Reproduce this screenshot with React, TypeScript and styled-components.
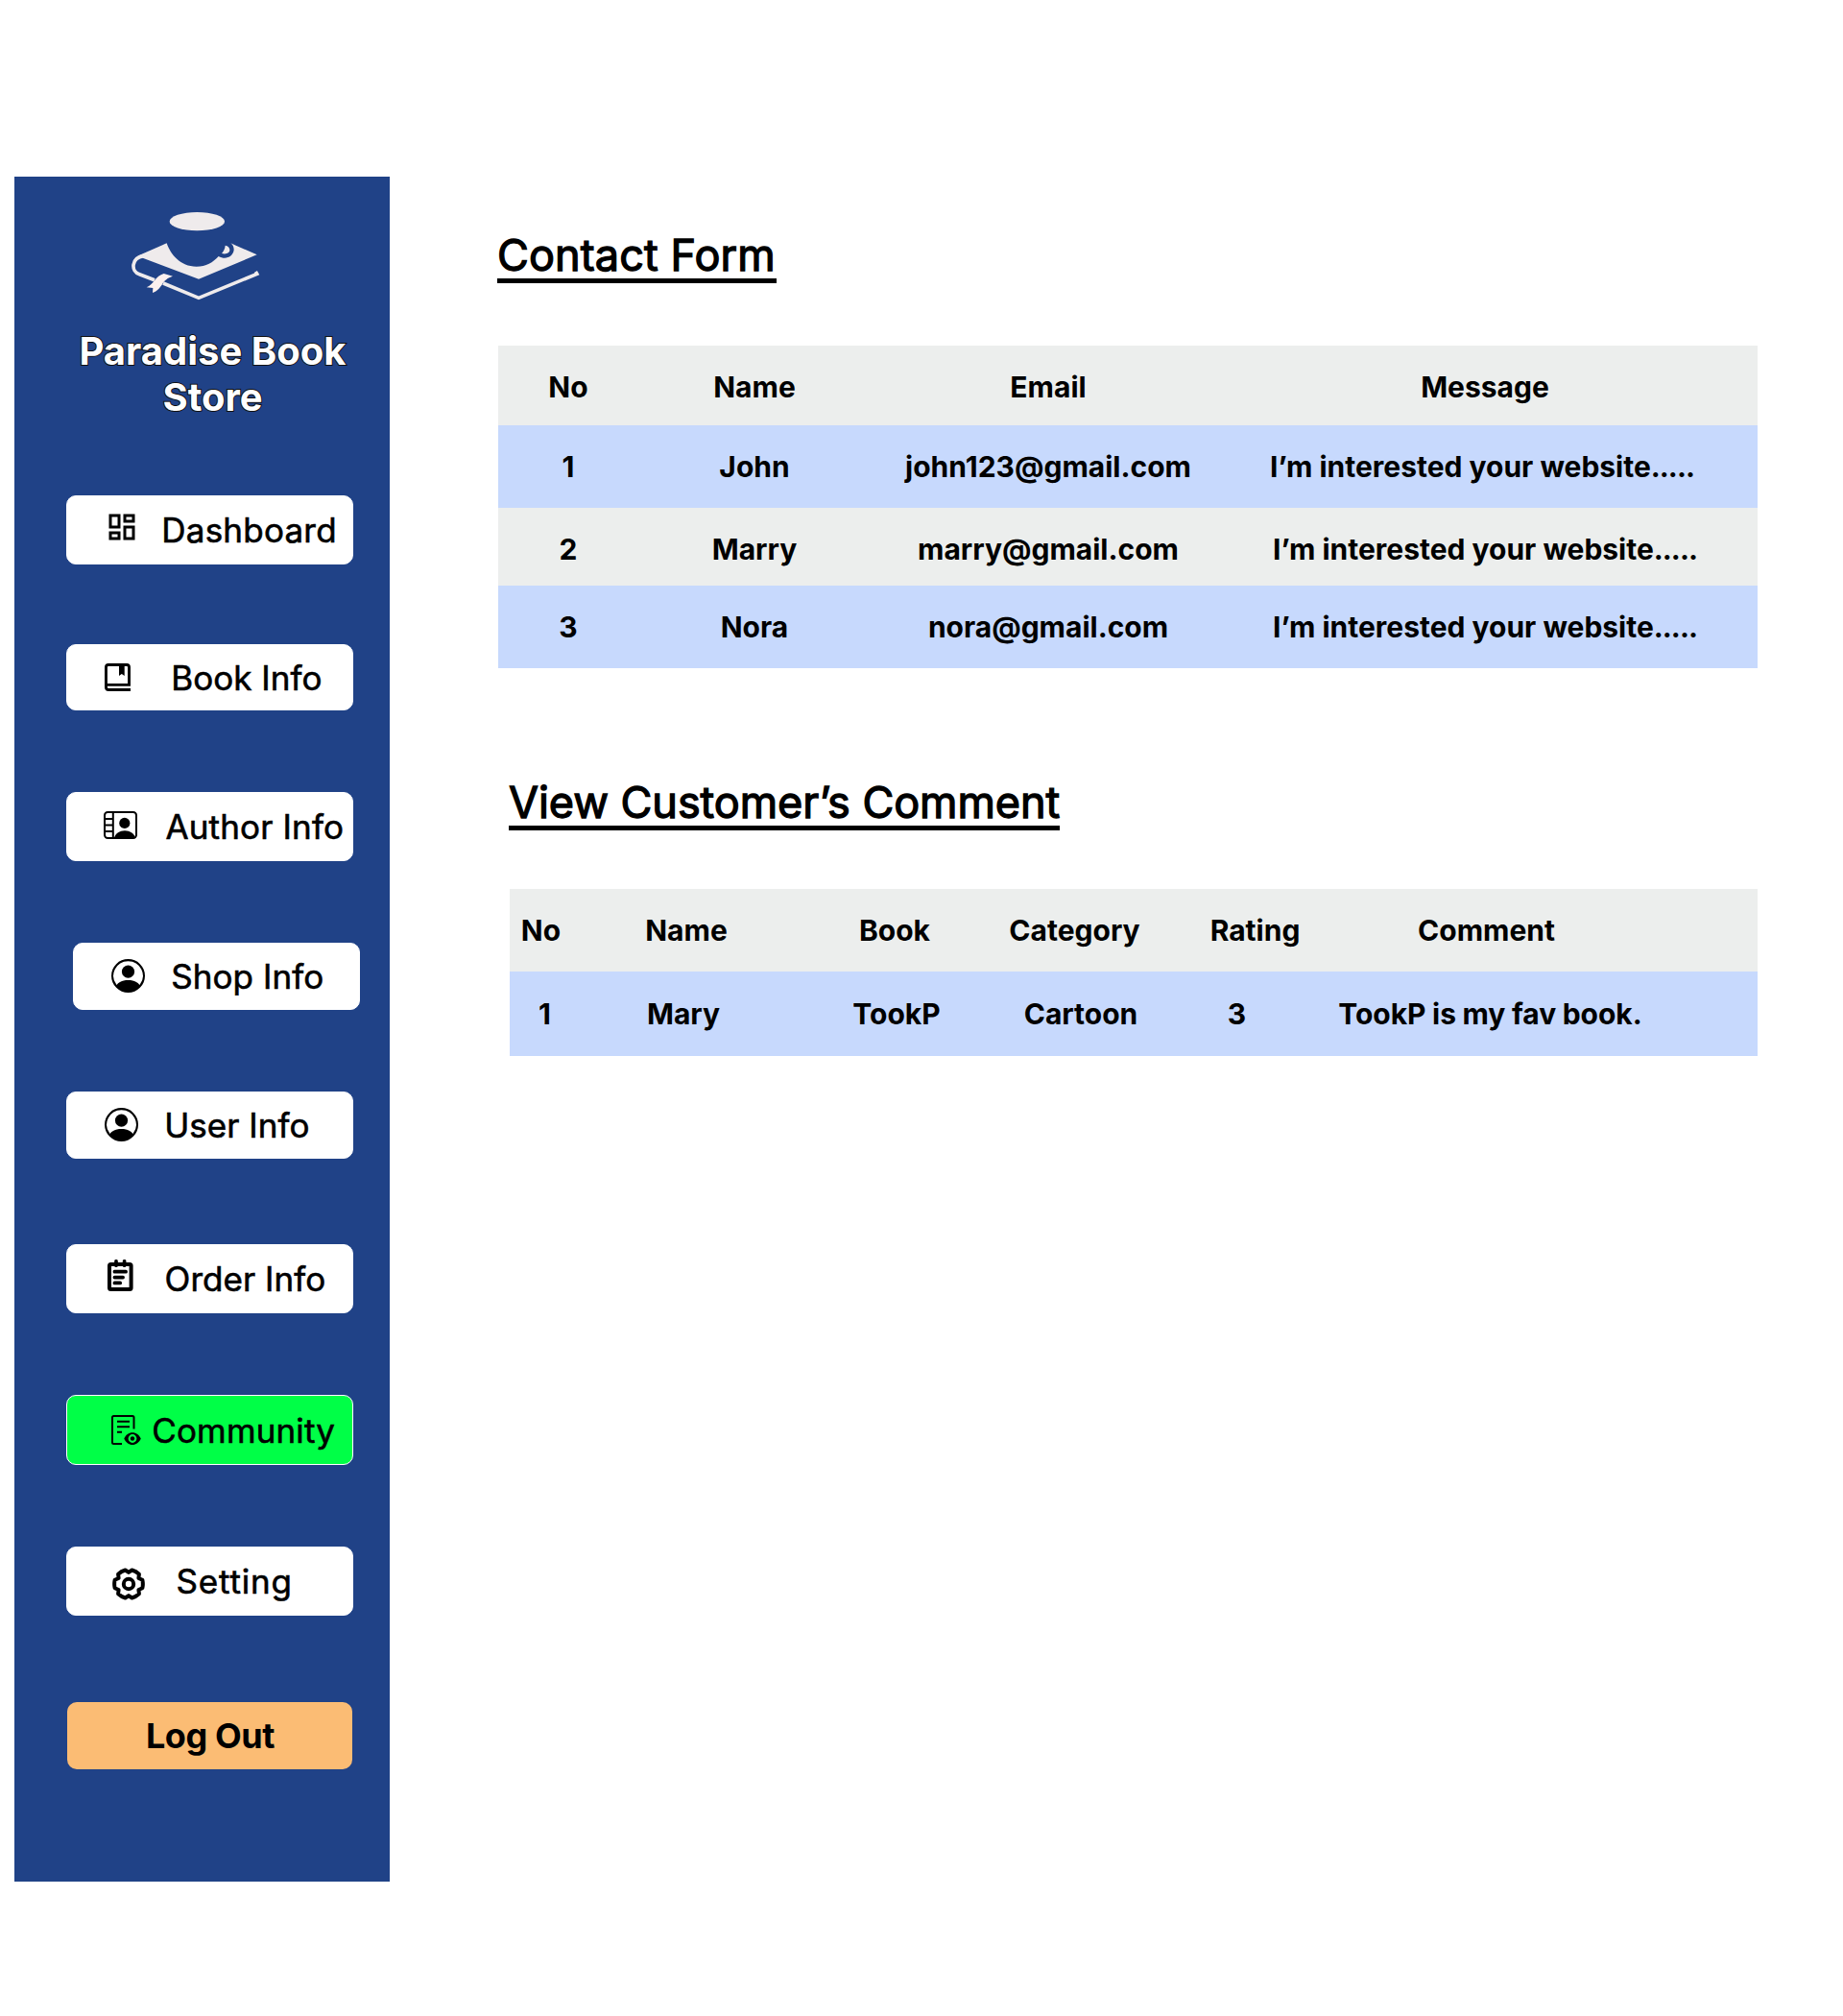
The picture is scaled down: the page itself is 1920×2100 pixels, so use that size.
import React from "react";
import styled, { createGlobalStyle } from "styled-components";
import { MdOutlineDashboard } from "react-icons/md";
import { BsPersonCircle } from "react-icons/bs";

const GlobalStyle = createGlobalStyle`
  *, *::before, *::after { box-sizing: border-box; }
  body { margin: 0; background: #fff; color: #000; font-family: Inter, "Liberation Sans", sans-serif; }
`;

const Page = styled.div`
  display: flex;
  align-items: flex-start;
  width: 1920px;
  height: 2100px;
  padding: 184px 89px 0 15px;
`;

const Sidebar = styled.aside`
  display: flex;
  flex-direction: column;
  flex: none;
  width: 391px;
  height: 1776px;
  padding: 33px 0 0 54px;
  background: #204287;
`;

const LogoSvg = styled.svg`
  display: block;
  flex: none;
  width: 140px;
  height: 100px;
  margin-left: 64px;
`;

const Brand = styled.h1`
  width: 305px;
  margin: 25px 0 78px;
  font-size: 40px;
  font-weight: 700;
  line-height: 48px;
  text-align: center;
  color: #fff;
  -webkit-text-stroke: 2px #111;
  paint-order: stroke fill;
`;

const Nav = styled.nav`
  display: flex;
  flex-direction: column;
`;

const NavButton = styled.a<{ $height: number; $after: number; $shift?: number; $start: number; $active?: boolean }>`
  display: flex;
  align-items: center;
  width: 299px;
  height: ${(p) => p.$height}px;
  margin: 0 0 ${(p) => p.$after}px ${(p) => p.$shift ?? 0}px;
  padding-left: ${(p) => p.$start - 1}px;
  border: 1px solid #fff;
  border-radius: 10px;
  background: ${(p) => (p.$active ? "#00ff47" : "#fff")};
  color: #000;
`;

const IconSlot = styled.span<{ $top: number; $gap: number }>`
  display: flex;
  flex: none;
  align-self: flex-start;
  margin: ${(p) => p.$top - 1}px ${(p) => p.$gap}px 0 0;
`;

const NavLabel = styled.span<{ $spacing: number }>`
  font-size: 35px;
  line-height: 44px;
  letter-spacing: ${(p) => p.$spacing}px;
  white-space: nowrap;
  -webkit-text-stroke: 0.6px #000;
`;

const LogOut = styled.button`
  width: 297px;
  height: 70px;
  margin-left: 1px;
  padding: 0 0 0 1px;
  border: 0;
  border-radius: 10px;
  background: #fbbc74;
  color: #000;
  font: 700 36px/44px Inter, "Liberation Sans", sans-serif;
  letter-spacing: -0.4px;
`;

const Main = styled.main`
  display: flex;
  flex-direction: column;
  padding: 57px 0 0 112px;
`;

const Section = styled.section<{ $indent: number; $after: number }>`
  display: flex;
  flex-direction: column;
  align-items: flex-start;
  margin: 0 0 ${(p) => p.$after}px ${(p) => p.$indent}px;
`;

const Heading = styled.h2<{ $after: number; $width: number; $spacing: number }>`
  width: ${(p) => p.$width}px;
  height: 54px;
  margin: 0 0 ${(p) => p.$after}px;
  border-bottom: 5px solid #000;
  font-size: 45px;
  font-weight: 400;
  line-height: 49px;
  letter-spacing: ${(p) => p.$spacing}px;
  white-space: nowrap;
  -webkit-text-stroke: 1.3px #000;
`;

const Table = styled.div`
  display: flex;
  flex-direction: column;
  margin-left: 1px;
`;

const Row = styled.div<{ $width: number; $height: number; $columns: string; $tinted?: boolean; $top?: number }>`
  display: grid;
  grid-template-columns: ${(p) => p.$columns};
  width: ${(p) => p.$width}px;
  height: ${(p) => p.$height}px;
  padding-top: ${(p) => p.$top ?? 25}px;
  background: ${(p) => (p.$tinted ? "#c7d9fd" : "#eceeed")};
  font-size: 30px;
  font-weight: 700;
  line-height: 36px;
  text-align: center;
  white-space: nowrap;
`;

const Cell = styled.span<{ $words?: number }>`
  word-spacing: ${(p) => p.$words ?? 0}px;
`;

const Dots = styled.span`
  letter-spacing: -1px;
`;

const Logo = () => (
  <LogoSvg viewBox="399 141 420 300" fill="none">
    <ellipse cx="616" cy="182" rx="86" ry="29" fill="#efebec" />
    <path
      d="M521 250C532 282 562 323 614 323C644 323 666 310 683 291C704 303 728 294 731 271C731 262 728 255 721 250L803 286L621 362L446 296L436 287Z"
      fill="#efebec"
    />
    <path d="M704 257C712 258 718 264 718 271C718 281 706 286 693 282C699 275 703 267 704 257Z" fill="#efebec" />
    <path d="M448 290C410 296 408 338 436 347L483 365M510 375L621 421L803 346L799 339" stroke="#efebec" strokeWidth="11" />
    <path d="M512 345L540 353C524 358 514 366 506 380C498 391 492 399 477 405L478 390L458 388C480 380 486 352 512 345Z" fill="#fdf1ef" />
  </LogoSvg>
);

const BookIcon = () => (
  <svg width="27" height="29" viewBox="0 0 27 29" fill="none" stroke="#000" strokeWidth="2.9">
    <path d="M27 27.5H4.2A2.8 2.8 0 0 1 1.45 24.7V3.9A2.5 2.5 0 0 1 3.9 1.45H23.1A2.5 2.5 0 0 1 25.5 3.9V22.4H2" />
    <path d="M15 2H20.7V13L17.8 11L15 13Z" fill="#000" stroke="none" />
  </svg>
);

const AuthorIcon = () => (
  <svg width="35" height="29" viewBox="0 0 35 29" fill="none" stroke="#000" strokeWidth="2">
    <rect x="1" y="1" width="33" height="27" rx="3.2" />
    <path d="M9.8 1V28M1 8H9.8M1 14.5H9.8M1 21H9.8" />
    <g fill="#000" stroke="none">
      <circle cx="21.8" cy="12.4" r="5.6" />
      <path d="M11 27.6C12.5 23 16.5 20.2 22 20.2C27.5 20.2 31.5 23 33 27.6Z" />
    </g>
  </svg>
);

const OrderIcon = () => (
  <svg width="27" height="33" viewBox="0 0 27 33" fill="none" stroke="#000" strokeWidth="3.7" strokeLinecap="round">
    <rect x="2" y="5" width="22.6" height="26" rx="1.5" strokeWidth="4" />
    <path d="M9 1.8V6.2M17.6 1.8V6.2M7.4 12.7H19.1M7.4 18.6H16.1M7.4 24.4H13.2" />
  </svg>
);

const CommunityIcon = () => (
  <svg width="31" height="31" viewBox="0 0 31 31" fill="none" stroke="#000" strokeWidth="2">
    <path d="M11 30H2.5A1.5 1.5 0 0 1 1 28.5V2.5A1.5 1.5 0 0 1 2.5 1H22A1.5 1.5 0 0 1 23.5 2.5V14.5M6 6.8H19M6 12.2H19M6 17.8H11" />
    <path
      d="M13.3 24.5C15 20.5 18.2 18.2 22 18.2S29 20.5 30.8 24.5C29 28.6 25.8 31 22 31S15 28.6 13.3 24.5ZM22 20.1A4.4 4.4 0 1 0 22 28.900A4.4 4.4 0 1 0 22 20.1Z"
      fill="#000"
      fillRule="evenodd"
      stroke="none"
    />
    <circle cx="22" cy="24.5" r="2.2" fill="#000" stroke="none" />
  </svg>
);

const SettingIcon = () => (
  <svg width="34" height="34" viewBox="-17 -17 34 34" fill="none" stroke="#000" strokeWidth="4" strokeLinejoin="round">
    <path d="M14.4 -4.2Q15.3 0 14.4 4.2L10.4 6L10.9 10.3Q7.700 13.300 3.500 14.500L0 12.100L-3.500 14.500Q-7.700 13.300 -10.900 10.300L-10.400 6L-14.400 4.200Q-15.300 0 -14.400 -4.200L-10.400 -6L-10.900 -10.300Q-7.700 -13.300 -3.500 -14.500L0 -12.100L3.500 -14.500Q7.700 -13.300 10.900 -10.300L10.400 -6Z" />
    <circle r="5.2" />
  </svg>
);

const navItems = [
  { label: "Dashboard", icon: <MdOutlineDashboard size={36} />, height: 72, after: 83, start: 39.5, top: 14.5, gap: 23.8, spacing: 0.22 },
  { label: "Book Info", icon: <BookIcon />, height: 69, after: 85, start: 40, top: 20, gap: 42.3, spacing: 0.02 },
  { label: "Author Info", icon: <AuthorIcon />, height: 72, after: 85, start: 39, top: 20.3, gap: 29.4, spacing: 0.16 },
  { label: "Shop Info", icon: <BsPersonCircle size={35} />, height: 70, after: 85, shift: 7, start: 40, top: 17.3, gap: 27.3, spacing: 0.06 },
  { label: "User Info", icon: <BsPersonCircle size={35} />, height: 70, after: 89, start: 40, top: 17.2, gap: 27.3, spacing: 0.02 },
  { label: "Order Info", icon: <OrderIcon />, height: 72, after: 85, start: 43, top: 15.8, gap: 32.6, spacing: 0.05 },
  { label: "Community", icon: <CommunityIcon />, height: 73, after: 85, start: 47, top: 21, gap: 11.3, spacing: 0.13, active: true },
  { label: "Setting", icon: <SettingIcon />, height: 72, after: 90, start: 48.4, top: 22.4, gap: 32.2, spacing: 0.8 },
];

const message = (
  <>
    I’m interested your website<Dots>.....</Dots>
  </>
);

const contactColumns = "146px 242px 370px 540px";
const contactRows = [
  { height: 83, columns: contactColumns, cells: ["No", "Name", "Email", "Message"] },
  { height: 86, columns: "146px 242px 370px 534px", tinted: true, cells: ["1", "John", "john123@gmail.com", message] },
  { height: 81, columns: contactColumns, cells: ["2", "Marry", "marry@gmail.com", message] },
  { height: 86, columns: contactColumns, tinted: true, cells: ["3", "Nora", "nora@gmail.com", message] },
];

const commentRows = [
  { height: 86, top: 25, columns: "65px 238px 196px 179px 197px 285px", cells: ["No", "Name", "Book", "Category", "Rating", "Comment"] },
  { height: 88, top: 26, columns: "73px 216px 228px 156px 169px 359px", tinted: true, cells: ["1", "Mary", "TookP", "Cartoon", "3", "TookP is my fav book."] },
];

export default function App() {
  return (
    <>
      <GlobalStyle />
      <Page>
        <Sidebar>
          <Logo />
          <Brand>Paradise Book Store</Brand>
          <Nav>
            {navItems.map((n) => (
              <NavButton key={n.label} $height={n.height} $after={n.after} $shift={n.shift} $start={n.start} $active={n.active}>
                <IconSlot $top={n.top} $gap={n.gap}>{n.icon}</IconSlot>
                <NavLabel $spacing={n.spacing}>{n.label}</NavLabel>
              </NavButton>
            ))}
          </Nav>
          <LogOut>Log Out</LogOut>
        </Sidebar>
        <Main>
          <Section $indent={0} $after={115}>
            <Heading $width={291} $after={65} $spacing={0.1}>Contact Form</Heading>
            <Table>
              {contactRows.map((r, i) => (
                <Row key={i} $width={1312} $height={r.height} $columns={r.columns} $tinted={r.tinted}>
                  {r.cells.map((c, j) => <Cell key={j}>{c}</Cell>)}
                </Row>
              ))}
            </Table>
          </Section>
          <Section $indent={12} $after={0}>
            <Heading $width={574} $after={61} $spacing={-0.06}>View Customer’s Comment</Heading>
            <Table>
              {commentRows.map((r, i) => (
                <Row key={i} $width={1300} $height={r.height} $columns={r.columns} $tinted={r.tinted} $top={r.top}>
                  {r.cells.map((c, j) => <Cell key={j} $words={-0.6}>{c}</Cell>)}
                </Row>
              ))}
            </Table>
          </Section>
        </Main>
      </Page>
    </>
  );
}
